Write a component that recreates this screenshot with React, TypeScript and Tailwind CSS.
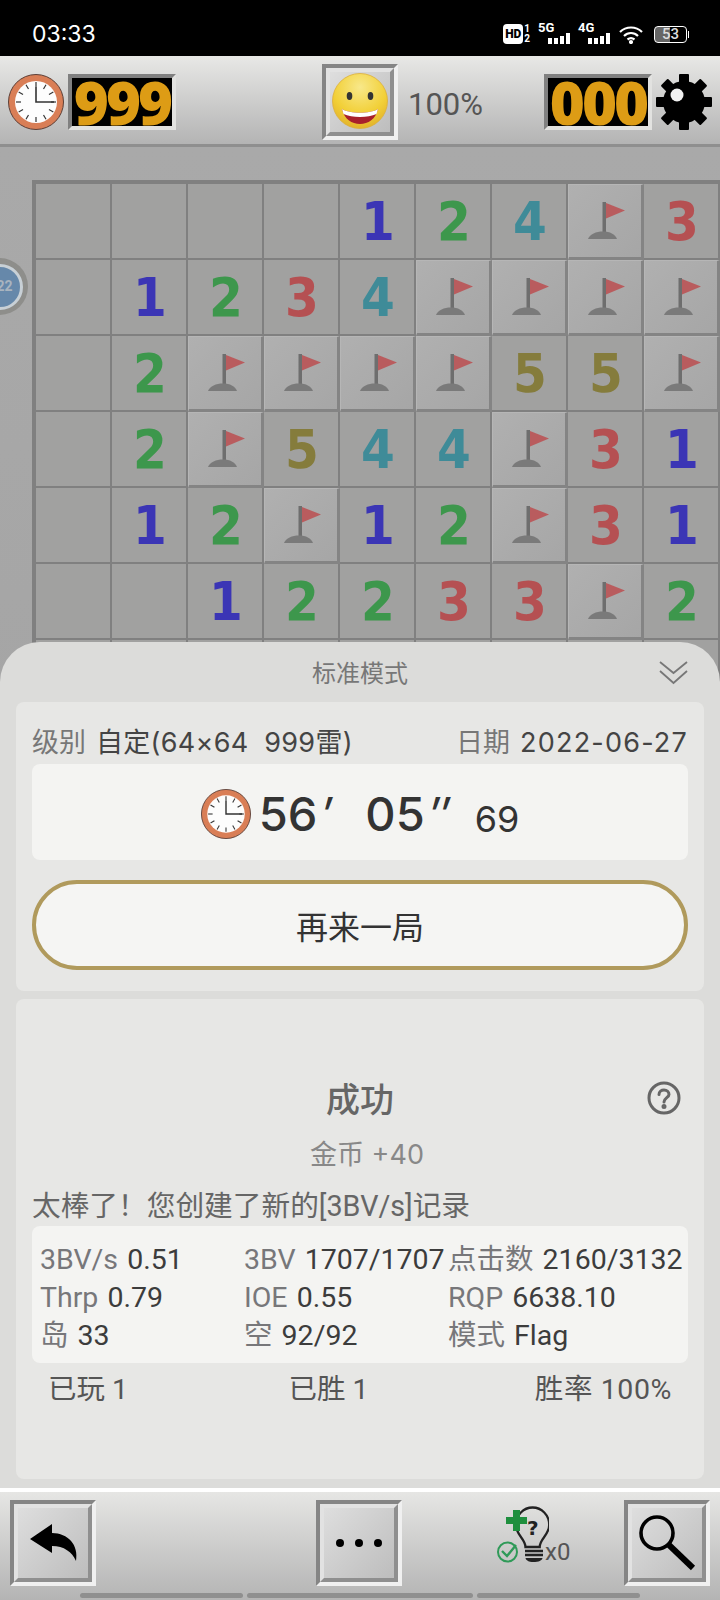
import React from 'react';

const SANS = 'font-["Roboto","Noto_Sans_CJK_SC",sans-serif]';
const ROUND = 'font-["Inter","Noto_Sans_CJK_SC",sans-serif]';

const BOARD = [
  '....124F3',
  '.1234FFFF',
  '.2FFFF55F',
  '.2F544F31',
  '.12F12F31',
  '..12233F2',
  '.........',
];

const NUM_COLORS: Record<string, string> = {
  '1': 'text-[#3b35b5]',
  '2': 'text-[#3d974c]',
  '3': 'text-[#b55052]',
  '4': 'text-[#3f8b98]',
  '5': 'text-[#857c3c]',
};

const Clock = ({ size }: { size: number }) => (
  <svg width={size} height={size} viewBox="0 0 56 56">
    <circle cx="28" cy="28" r="27.5" fill="#d97e56" stroke="#5c4038" strokeWidth="1" />
    <circle cx="28" cy="28" r="21" fill="#fdfdfd" />
    {Array.from({ length: 12 }).map((_, i) => (
      <line key={i} x1="28" y1="8" x2="28" y2="13" stroke="#333" strokeWidth="1.2" transform={`rotate(${i * 30} 28 28)`} />
    ))}
    <path d="M28 13V28H46" fill="none" stroke="#333" strokeWidth="1.6" />
  </svg>
);

const Smiley = () => (
  <svg width="60" height="60" viewBox="0 0 60 60">
    <defs>
      <radialGradient id="face" cx="50%" cy="25%" r="80%">
        <stop offset="0%" stopColor="#f8e88a" />
        <stop offset="60%" stopColor="#f2d038" />
        <stop offset="100%" stopColor="#e0ae28" />
      </radialGradient>
    </defs>
    <circle cx="30" cy="29" r="27.5" fill="url(#face)" stroke="#dcae3a" strokeWidth="0.8" />
    <ellipse cx="19.5" cy="24" rx="2.8" ry="4" fill="#333" />
    <ellipse cx="40.5" cy="24" rx="2.8" ry="4" fill="#333" />
    <path d="M12 37C20 42 40 42 48 37C46 47 38 52 30 52C22 52 14 47 12 37Z" fill="#a8202c" />
    <path d="M12 37C20 42 40 42 48 37L46.5 42C38 46 22 46 13.5 42Z" fill="#fff" />
  </svg>
);

const Gear = () => (
  <svg width="56" height="56" viewBox="0 0 56 56">
    {Array.from({ length: 4 }).map((_, i) => (
      <rect key={i} x="23" y="0" width="10" height="56" rx="1" fill="#000" transform={`rotate(${i * 45} 28 28)`} />
    ))}
    <circle cx="28" cy="28" r="21" fill="#000" />
    <circle cx="21" cy="21" r="6.5" fill="#f2f2f2" />
  </svg>
);

const Counter = ({ value }: { value: string }) => (
  <div className="flex h-[56px] w-[108px] items-center justify-center border-4 border-t-[#808080] border-r-[#e2e2e0] border-b-[#e2e2e0] border-l-[#808080] bg-black font-['Open_Sans',sans-serif] text-[60px] leading-none font-extrabold tracking-[-3px] text-[#dd9c15]">
    {value}
  </div>
);

const BevelButton = ({ children, className }: { children: React.ReactNode; className: string }) => (
  <div className={`border-4 border-t-[#858585] border-r-[#f0f0f0] border-b-[#f0f0f0] border-l-[#858585] ${className}`}>
    <div className="flex h-full w-full items-center justify-center border-4 border-t-[#e2e2e2] border-r-[#8f8f8f] border-b-[#8f8f8f] border-l-[#e2e2e2] bg-gradient-to-br from-[#dedede] to-[#bdbdbd]">
      {children}
    </div>
  </div>
);

const Flag = () => (
  <svg width="42" height="38" viewBox="0 0 42 38">
    <rect x="18.5" y="0" width="3.5" height="31" fill="#6e6e6e" />
    <path d="M22 1L41 8.5L22 16.5Z" fill="#b95c5e" />
    <path d="M4 37C6 32 12 29.5 19 29.5C26 29.5 31 32 33 37Z" fill="#7a7a7a" />
  </svg>
);

const Cell = ({ value }: { value: string }) => {
  if (value === 'F') {
    return (
      <div className="flex h-[76px] items-center justify-center border-t border-r-[3px] border-b-[3px] border-l border-t-[#b6b6b6] border-r-[#848484] border-b-[#848484] border-l-[#b6b6b6] bg-gradient-to-br from-[#b0b0b0] to-[#a6a6a6]">
        <Flag />
      </div>
    );
  }
  return (
    <div className="flex h-[76px] items-center justify-center border-r-2 border-b-2 border-[#808080] bg-[#a1a1a0] pt-[1px] pl-[2px] font-['DejaVu_Sans',sans-serif] text-[54px] leading-none font-bold">
      <span className={`inline-block scale-x-[0.9] ${NUM_COLORS[value]}`}>{value === '.' ? '' : value}</span>
    </div>
  );
};

const Stat = ({ label, value }: { label: string; value: string }) => (
  <div className="whitespace-nowrap">
    <span className="text-[#77777a]">{label}</span> <span className="ml-[2px] text-[#3c3c3c]">{value}</span>
  </div>
);

const Signal = ({ label, className }: { label: string; className: string }) => (
  <div className={`relative h-[20px] w-[32px] ${className}`}>
    <span className="absolute top-[-3px] left-0 text-[13px] leading-[14px] font-bold">{label}</span>
    <div className="absolute right-0 bottom-0 flex items-end gap-[2px]">
      <span className="h-[6px] w-[4px] bg-white" />
      <span className="h-[6px] w-[4px] bg-white" />
      <span className="h-[8px] w-[4px] bg-white" />
      <span className="h-[11px] w-[4px] bg-white" />
    </div>
  </div>
);

const StatusBar = () => (
  <div className="flex h-[56px] items-center justify-between bg-black pt-[12px] pr-[33px] pl-[32px] text-white">
    <span className="font-['Inter',sans-serif] text-[23px]">03:33</span>
    <div className="flex items-center font-['Roboto',sans-serif]">
      <div className="flex h-[20px] w-[20px] items-center justify-center rounded-[4px] bg-white text-[12px] font-black text-black">HD</div>
      <div className="ml-[1px] flex flex-col text-[10px] leading-[10px] font-bold">
        <span>1</span>
        <span>2</span>
      </div>
      <Signal label="5G" className="ml-[8px]" />
      <Signal label="4G" className="ml-[8px]" />
      <svg className="ml-[9px]" width="24" height="19" viewBox="0 0 24 19" fill="none" stroke="#fff" strokeWidth="2.2">
        <path d="M1 7C7 1 17 1 23 7" />
        <path d="M5 11C9 7 15 7 19 11" />
        <path d="M8.5 14.5C10.5 13 13.5 13 15.5 14.5" />
        <circle cx="12" cy="17" r="1" fill="#fff" />
      </svg>
      <div className="relative ml-[11px] flex h-[17px] w-[33px] items-center justify-center rounded-[4px] border border-white bg-[linear-gradient(90deg,#666_0_50%,#000_50%)] text-[15px] leading-none font-medium text-[#ddd]">
        53
        <span className="absolute top-[4px] right-[-3px] h-[7px] w-[1px] bg-white" />
      </div>
    </div>
  </div>
);

const Header = () => (
  <div className="flex h-[91px] items-start border-b-[3px] border-[#8f8f8f] bg-gradient-to-b from-[#e8e8e6] to-[#b4b4b4] pt-[8px]">
    <div className="mt-[10px] ml-[8px]">
      <Clock size={56} />
    </div>
    <div className="mt-[10px] ml-[4px]">
      <Counter value="999" />
    </div>
    <BevelButton className="ml-[146px] h-[76px] w-[76px]">
      <Smiley />
    </BevelButton>
    <span className={`mt-[18px] ml-[10px] w-[136px] text-[31px] text-[#555] ${SANS}`}>100%</span>
    <div className="mt-[10px]">
      <Counter value="000" />
    </div>
    <div className="mt-[10px] ml-[4px]">
      <Gear />
    </div>
  </div>
);

const Board = () => (
  <div className="relative flex-1 overflow-hidden bg-gradient-to-b from-[#a9a9a9] to-[#a0a0a0] pt-[33px] pl-[32px]">
    <div className="grid w-[688px] grid-cols-[repeat(9,76px)] border-t-4 border-l-4 border-[#808080]">
      {BOARD.join('').split('').map((v, i) => (
        <Cell key={i} value={v} />
      ))}
    </div>
    {/* floating bubble on the left edge */}
    <div className="absolute top-[111px] left-[-29px] flex h-[57px] w-[57px] items-center justify-center rounded-full bg-[#8e8e8b]">
      <div className="flex h-[46px] w-[46px] items-center justify-center rounded-full border-[3px] border-[#c8d0d6] bg-[#6688aa] pl-[10px] font-['Roboto',sans-serif] text-[14px] font-bold text-[#a9b4bf]">
        22
      </div>
    </div>
  </div>
);

const Sheet = () => (
  <div className={`absolute top-[642px] left-0 flex h-[846px] w-[720px] flex-col rounded-t-[40px] bg-[#dcdcda] px-[16px] ${SANS}`}>
    <div className="relative flex h-[60px] items-center justify-center pt-[4px] text-[24px] text-[#777]">
      标准模式
      <svg className="absolute top-[18px] right-[16px]" width="29" height="25" viewBox="0 0 29 25" fill="none" stroke="#777" strokeWidth="1.8">
        <path d="M1 2L14.5 13L28 2" />
        <path d="M1 11L14.5 23L28 11" />
      </svg>
    </div>

    <div className="flex h-[289px] flex-col rounded-[8px] bg-[#e7e7e5] px-[16px]">
      <div className={`flex h-[62px] items-center justify-between pt-[20px] text-[27px] whitespace-nowrap ${ROUND}`}>
        <div>
          <span className="text-[#777]">级别</span>
          <span className="ml-[10px] tracking-[0.3px] text-[#444]">自定(64×64&nbsp;&nbsp;999雷)</span>
        </div>
        <div>
          <span className="text-[#777]">日期</span>
          <span className="ml-[10px] tracking-[1.2px] text-[#444]">2022-06-27</span>
        </div>
      </div>
      <div className={`flex h-[96px] items-center justify-center rounded-[8px] bg-[#f4f4f2] pt-[3px] text-[#333] ${ROUND}`}>
        <Clock size={50} />
        <span className="ml-[8px] text-[47px] leading-none font-medium">56</span>
        <span className="ml-[4px] w-[44px] text-[47px] leading-none italic">′</span>
        <span className="text-[47px] leading-none font-medium">05</span>
        <span className="ml-[4px] w-[46px] text-[47px] leading-none italic">″</span>
        <span className="mt-[10px] text-[36px] leading-none">69</span>
      </div>
      <div className="mt-[20px] flex h-[90px] items-center justify-center rounded-full border-4 border-[#b09a5c] bg-[#f5f5f3] pt-[5px] text-[32px] text-[#333]">
        再来一局
      </div>
    </div>

    <div className="mt-[8px] flex h-[480px] flex-col rounded-[8px] bg-[#e7e7e5] px-[16px]">
      <div className="relative mt-[79px] flex h-[44px] items-center justify-center text-[34px] font-medium text-[#666]">
        成功
        <svg className="absolute top-[3px] right-[7px]" width="34" height="34" viewBox="0 0 34 34" fill="none" stroke="#666" strokeWidth="3">
          <circle cx="17" cy="17" r="15" />
          <path d="M12 13.5C12 10.5 14.5 9 17 9C20 9 22 11 22 13.5C22 16.5 17 17 17 21" strokeLinecap="round" />
          <circle cx="17" cy="25.5" r="1" fill="#666" />
        </svg>
      </div>
      <div className={`mt-[11px] pl-[14px] text-center text-[27px] leading-[44px] text-[#888] ${ROUND}`}>金币 +40</div>
      <div className="mt-[9px] text-[28.7px] leading-[40px] text-[#666]">太棒了！您创建了新的[3BV/s]记录</div>
      <div className="grid h-[137px] grid-cols-[204px_204px_1fr] content-center rounded-[8px] bg-[#f4f4f2] pt-[6px] pl-[8px] text-[28.5px] leading-[38px]">
        <Stat label="3BV/s" value="0.51" />
        <Stat label="3BV" value="1707/1707" />
        <Stat label="点击数" value="2160/3132" />
        <Stat label="Thrp" value="0.79" />
        <Stat label="IOE" value="0.55" />
        <Stat label="RQP" value="6638.10" />
        <Stat label="岛" value="33" />
        <Stat label="空" value="92/92" />
        <Stat label="模式" value="Flag" />
      </div>
      <div className="mt-[8px] flex justify-between pr-[16px] pl-[16px] text-[28.5px] leading-[38px] text-[#555]">
        <span>已玩 1</span>
        <span className="mr-[6px]">已胜 1</span>
        <span className="tracking-[0.6px]">胜率 100%</span>
      </div>
    </div>
  </div>
);

const BottomBar = () => (
  <div className="relative flex h-[112px] items-start border-t-4 border-white bg-gradient-to-b from-[#e6e6e4] to-[#b4b4b4] pt-[8px] pl-[10px]">
    <BevelButton className="h-[86px] w-[86px]">
      <svg width="62" height="62" viewBox="0 0 62 62">
        <path d="M8 27L30 12L30 21C46 21 57 33 54 49C50 40 42 34 30 34L30 41Z" fill="#000" />
      </svg>
    </BevelButton>
    <BevelButton className="ml-[220px] h-[86px] w-[86px]">
      <div className="flex gap-[11px]">
        <span className="h-[8px] w-[8px] rounded-full bg-black" />
        <span className="h-[8px] w-[8px] rounded-full bg-black" />
        <span className="h-[8px] w-[8px] rounded-full bg-black" />
      </div>
    </BevelButton>
    <div className="ml-[93px] flex h-[66px] w-[129px] items-end pt-[12px]">
      <svg className="shrink-0" width="54" height="62" viewBox="0 0 54 62" fill="none">
        <path d="M38 58C34 58 31 56.5 30.5 54H47.5C47 56.5 44 58 38 58Z" fill="#222" />
        <path d="M30 51H48M30 47H48" stroke="#222" strokeWidth="2.4" />
        <path d="M31 43C31 35 21 31 21 21C21 11 29 3.5 38.5 3.5C48 3.5 56 11 56 21C56 31 46 35 46 43Z" stroke="#222" strokeWidth="2.4" transform="translate(1 0) scale(0.95 1)" />
        <text x="32" y="31" fontFamily="DejaVu Sans" fontWeight="700" fontSize="20" fill="#222">?</text>
        <path d="M18 6H25V13H32V20H25V27H18V20H11V13H18Z" fill="#1f8f3e" />
        <circle cx="12.5" cy="48" r="9.5" stroke="#2f9a58" strokeWidth="2" />
        <path d="M7 47L12 52L21 41" stroke="#2f9a58" strokeWidth="2.4" />
      </svg>
      <span className={`mb-[2px] ml-[-4px] text-[24px] leading-none text-[#555] ${SANS}`}>x0</span>
    </div>
    <BevelButton className="h-[86px] w-[86px]">
      <svg width="62" height="62" viewBox="0 0 62 62" fill="none" stroke="#000">
        <circle cx="21" cy="21" r="16" strokeWidth="3.6" />
        <path d="M33 33L57 56" strokeWidth="6" />
      </svg>
    </BevelButton>
    <div className="absolute bottom-[2px] left-[80px] flex gap-[4px]">
      <span className="h-[5px] w-[163px] rounded-full bg-[#8f8f8f]" />
      <span className="h-[5px] w-[226px] rounded-full bg-[#8f8f8f]" />
      <span className="h-[5px] w-[163px] rounded-full bg-[#8f8f8f]" />
    </div>
  </div>
);

export default function App() {
  return (
    <div className="relative flex h-[1600px] w-[720px] flex-col overflow-hidden bg-[#a0a0a0]">
      <StatusBar />
      <Header />
      <Board />
      <Sheet />
      <BottomBar />
    </div>
  );
}
